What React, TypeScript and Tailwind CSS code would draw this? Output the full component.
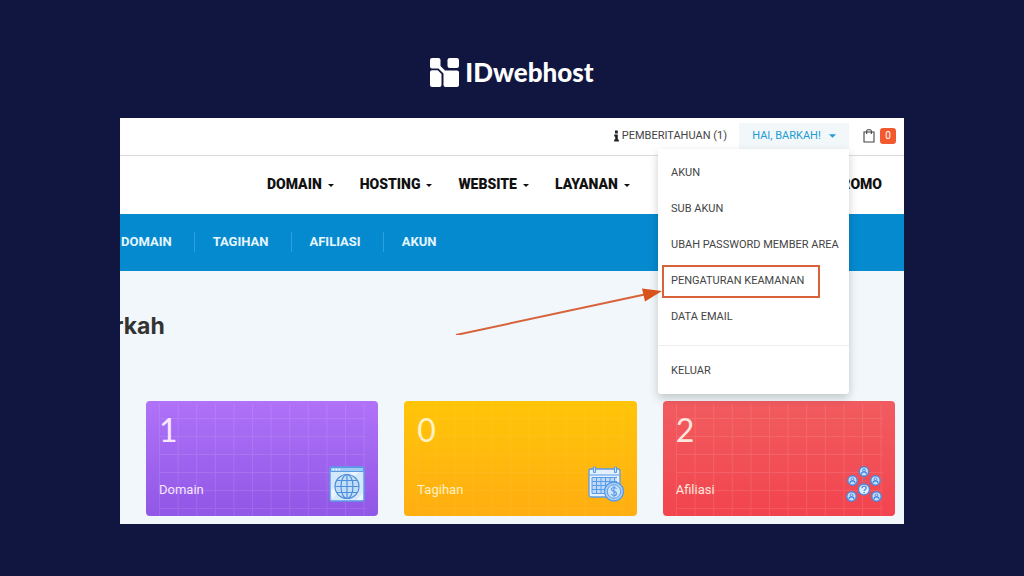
import type { ReactNode } from "react";

const mainNav = ["DOMAIN", "HOSTING", "WEBSITE", "LAYANAN"];
const subNav = ["DOMAIN", "TAGIHAN", "AFILIASI", "AKUN"];
const menuItems = [
  "AKUN",
  "SUB AKUN",
  "UBAH PASSWORD MEMBER AREA",
  "PENGATURAN KEAMANAN",
  "DATA EMAIL",
];

function Logo() {
  return (
    <svg viewBox="0 0 29 29" className="size-[29px]" aria-hidden="true">
      <g fill="#fff">
        <path d="M2 0h6.500a2 2 0 0 1 2 2v6l4.500 4.500H27a2 2 0 0 1 2 2V27a2 2 0 0 1-2 2H15.500a2 2 0 0 1-2-2V15.500L8.500 10.500H2a2 2 0 0 1-2-2V2a2 2 0 0 1 2-2z" />
        <rect x="17.500" y="0" width="11.500" height="10" rx="2.200" />
        <path d="M2 12.300h5.700l3.800 3.800V27a2 2 0 0 1-2 2H2a2 2 0 0 1-2-2V14.300a2 2 0 0 1 2-2z" />
      </g>
    </svg>
  );
}

function Caret({ className }: { className: string }) {
  return (
    <svg viewBox="0 0 8 4" className={className} aria-hidden="true">
      <path d="M0 0h8L4 4z" fill="currentColor" />
    </svg>
  );
}

function InfoIcon() {
  return (
    <svg viewBox="0 0 5 12" className="h-3 w-[5px]" aria-hidden="true">
      <path d="M1 .600h2.800v2.800H1zM.200 4.600h3.600v5h1V11.600H.200V9.600h1V6.600h-1z" fill="#222" />
    </svg>
  );
}

function BagIcon() {
  return (
    <svg viewBox="0 0 12 14" className="h-[14px] w-3" fill="none" stroke="#444" aria-hidden="true">
      <path d="M1 3h10v10H1zM3.700 5V2C3.700 1.300 4.200.800 5 .800h2c.800 0 1.300.500 1.300 1.200v3" strokeWidth="1.100" />
    </svg>
  );
}

function DomainIcon() {
  return (
    <svg viewBox="0 0 36 36" className="size-9" fill="none" stroke="#5b9be6" aria-hidden="true">
      <rect x="1" y="1" width="34" height="34" rx="1.500" fill="#d3e8fb" strokeWidth="1.400" />
      <path d="M2 24L22 6h8L3 33zM27 34l7-7v7z" fill="#eaf5ff" stroke="none" />
      <path d="M1.500 1.500h33v4h-33z" fill="#9ccaf5" strokeWidth="1" />
      <path d="M3.500 3.500h1.500M6.500 3.500H8M9.500 3.500H11" stroke="#fff" strokeWidth="1.300" />
      <g strokeWidth="1.200" stroke="#4f8fd9">
        <circle cx="18" cy="20.500" r="12" fill="#c3defa" />
        <ellipse cx="18" cy="20.500" rx="6" ry="12" />
        <path d="M18 8.500v24M6 20.500h24M8 14.500h20M8 26.500h20" />
      </g>
    </svg>
  );
}

function InvoiceIcon() {
  return (
    <svg viewBox="0 0 36 36" className="size-9" fill="none" stroke="#5b9be6" aria-hidden="true">
      <rect x="1" y="3" width="31" height="28" rx="2" fill="#e4f1fd" strokeWidth="1.300" />
      <path d="M1.500 9h30" strokeWidth="1.100" />
      <path d="M5.500 1h2v5.500h-2zM26.500 1h2v5.500h-2z" fill="#cbe3fb" strokeWidth="1" />
      <path d="M4 11.500h24.500v16.500H4z" fill="#bddbf8" stroke="none" />
      <path d="M4 11.500h25M4 15.500h25M4 19.500h25M4 23.500h17M4 27.500h14M4 11.500v16M8.500 11.500v16M13 11.500v16M17.500 11.500v16M22 11.500v8M26.500 11.500v5" strokeWidth="1" />
      <circle cx="26" cy="25.500" r="9.500" fill="#a8d0f7" strokeWidth="1.300" />
      <circle cx="26" cy="25.500" r="6.700" fill="#cde5fc" strokeWidth="1" />
      <path d="M28.500 22.800c-.500-1-1.400-1.300-2.500-1.300-1.400 0-2.500.700-2.500 1.900 0 2.800 5 1.300 5 4.100 0 1.300-1.200 2-2.500 2s-2.300-.500-2.700-1.600M26 20v11" strokeWidth="1.200" />
    </svg>
  );
}

const people = [
  [18, 5.5],
  [6.5, 14.5],
  [29.5, 14.5],
  [5.5, 30.5],
  [30.5, 30.5],
];

function AffiliateIcon() {
  return (
    <svg viewBox="0 0 36 36" className="size-9" fill="none" stroke="#4c86dc" aria-hidden="true">
      {people.map(([x, y]) => (
        <g key={`${x}-${y}`}>
          <path d={`M18 23L${x} ${y}`} strokeWidth="1" strokeDasharray="2 1" />
          <circle cx={x} cy={y} r="4.700" fill="#c5dffa" strokeWidth="1.400" />
          <circle cx={x} cy={y - 1.2} r="1.400" strokeWidth="1" />
          <path d={`M${x - 2.6} ${y + 3}c0-3.500 5.200-3.500 5.200 0`} strokeWidth="1.200" />
        </g>
      ))}
      <circle cx="18" cy="23.500" r="5.500" fill="#dcedfd" strokeWidth="1.300" />
      <path d="M16 22.200c0-2.800 4.200-2.600 4.200-.200 0 1.500-2.100 1.500-2.100 3M18.100 26v1.200" strokeWidth="1.300" />
    </svg>
  );
}

type CardProps = { id: string; count: number; label: string; tone: string; grid: string; icon: ReactNode };

function StatCard({ id, count, label, tone, grid, icon }: CardProps) {
  return (
    <a href={`#${id}`} className={`relative flex h-[115px] flex-col justify-between overflow-hidden rounded-[4px] px-[13px] pb-4 pt-[11px] ${tone}`}>
      <svg className={`absolute inset-0 size-full ${grid}`} aria-hidden="true">
        <defs>
          <pattern id={id} x="13" y="17" width="18.600" height="18" patternUnits="userSpaceOnUse">
            <path d="M0 .500h18.600M.500 0v18" stroke="#fff" strokeWidth="1" fill="none" />
          </pattern>
        </defs>
        <rect x="13" y="3" width="207" height="112" fill={`url(#${id})`} />
      </svg>
      <span className="relative font-[Lato,sans-serif] text-[32px] leading-9">{count}</span>
      <span className="relative font-[Roboto,sans-serif] text-[13px] leading-5">{label}</span>
      <span className="absolute bottom-[14px] right-[13px]">{icon}</span>
    </a>
  );
}

function AccountMenu() {
  return (
    <div className="relative ml-3">
      <button type="button" aria-expanded="true" className="flex h-[26px] w-[110px] items-center justify-center gap-2 bg-[#f2f7fa] text-[#219bd4]">
        HAI, BARKAH!
        <Caret className="h-1 w-[7px]" />
      </button>
      <ul className="absolute right-0 top-[26px] z-10 w-[191px] rounded-b-[3px] bg-white pb-[5px] pt-[6px] text-[#444] shadow-[0_4px_10px_rgba(0,0,0,0.2)]">
        {menuItems.map((item) => (
          <li key={item} className="relative">
            <a href="#menu" className="flex h-9 items-center whitespace-nowrap pl-[13px]">
              {item}
            </a>
            {item === "PENGATURAN KEAMANAN" && (
              <span className="pointer-events-none absolute left-1 top-[2px] h-[33px] w-[158px] border-2 border-[#d8623c]">
                <svg viewBox="0 0 208 48" className="absolute -left-[209px] top-[20px] h-12 w-[208px]" aria-hidden="true">
                  <path d="M1 48L192 7" stroke="#d8623c" strokeWidth="2" fill="none" />
                  <path d="M207 4L187 1.500l3 13z" fill="#d9521b" />
                </svg>
              </span>
            )}
          </li>
        ))}
        <li className="mt-[10px] border-t border-[#eeeeee] pt-[7px]">
          <a href="#keluar" className="flex h-9 items-center pl-[13px]">KELUAR</a>
        </li>
      </ul>
    </div>
  );
}

export default function App() {
  return (
    <div className="min-h-screen bg-[#10163f] px-[120px] pb-[52px] font-[Roboto,sans-serif]">
      <header className="flex h-[118px] items-end justify-center gap-[6px] pb-[31px] text-white">
        <Logo />
        <span className="font-[Lato,sans-serif] text-[26px] font-black leading-[29px]">IDwebhost</span>
      </header>

      <main className="overflow-hidden bg-[#f1f7fa]">
        <div className="flex h-[38px] items-center justify-end border-b border-[#dcdcdc] bg-white pb-[2px] pr-2 text-[11px] leading-4 text-[#444]">
          <a href="#pemberitahuan" className="flex items-center gap-[3px]">
            <InfoIcon />
            PEMBERITAHUAN (1)
          </a>
          <AccountMenu />
          <a href="#keranjang" aria-label="Keranjang" className="ml-[14px] flex items-center gap-[5px]">
            <BagIcon />
            <span className="flex size-4 items-center justify-center rounded-[3px] bg-[#f15a2f] text-[10px] text-white">0</span>
          </a>
        </div>

        <nav aria-label="Utama" className="flex h-[58px] items-center gap-[26px] bg-white pb-[2px] pl-[147px] pr-[22px] text-[14px] font-black leading-5 text-[#111]">
          {mainNav.map((item) => (
            <a key={item} href="#utama" className="flex items-center gap-[6px]">
              {item}
              <Caret className="mt-[2px] h-[3px] w-[6px]" />
            </a>
          ))}
          <a href="#promo" className="ml-auto">PROMO</a>
        </nav>

        <nav aria-label="Member area" className="flex h-[57px] items-center bg-[#058ad0] pb-[2px] text-[13px] font-bold leading-5 text-[#e6f6ff]">
          {subNav.map((item) => (
            <a key={item} href="#member" className="border-r border-[#2c9fdc] pl-[18px] pr-[22px] first:pl-px last:border-r-0">
              {item}
            </a>
          ))}
        </nav>

        <section className="pb-2 pl-[26px] pr-[9px] pt-10">
          <h1 className="-ml-[32px] font-[Inter,sans-serif] text-[23px] font-bold leading-[30px] text-[#333]">rkah</h1>
          <div className="mt-[60px] grid grid-cols-3 gap-[26px]">
            <StatCard id="domain" count={1} label="Domain" tone="bg-linear-to-b from-[#b072f8] to-[#9157e6] text-[#f7e8ff]" grid="opacity-10" icon={<DomainIcon />} />
            <StatCard id="tagihan" count={0} label="Tagihan" tone="bg-linear-to-b from-[#ffc508] to-[#ffae12] text-[#fff2c4]" grid="opacity-5" icon={<InvoiceIcon />} />
            <StatCard id="afiliasi" count={2} label="Afiliasi" tone="bg-linear-to-b from-[#f15c60] to-[#f2444f] text-[#ffe6dc]" grid="opacity-10" icon={<AffiliateIcon />} />
          </div>
        </section>
      </main>
    </div>
  );
}
